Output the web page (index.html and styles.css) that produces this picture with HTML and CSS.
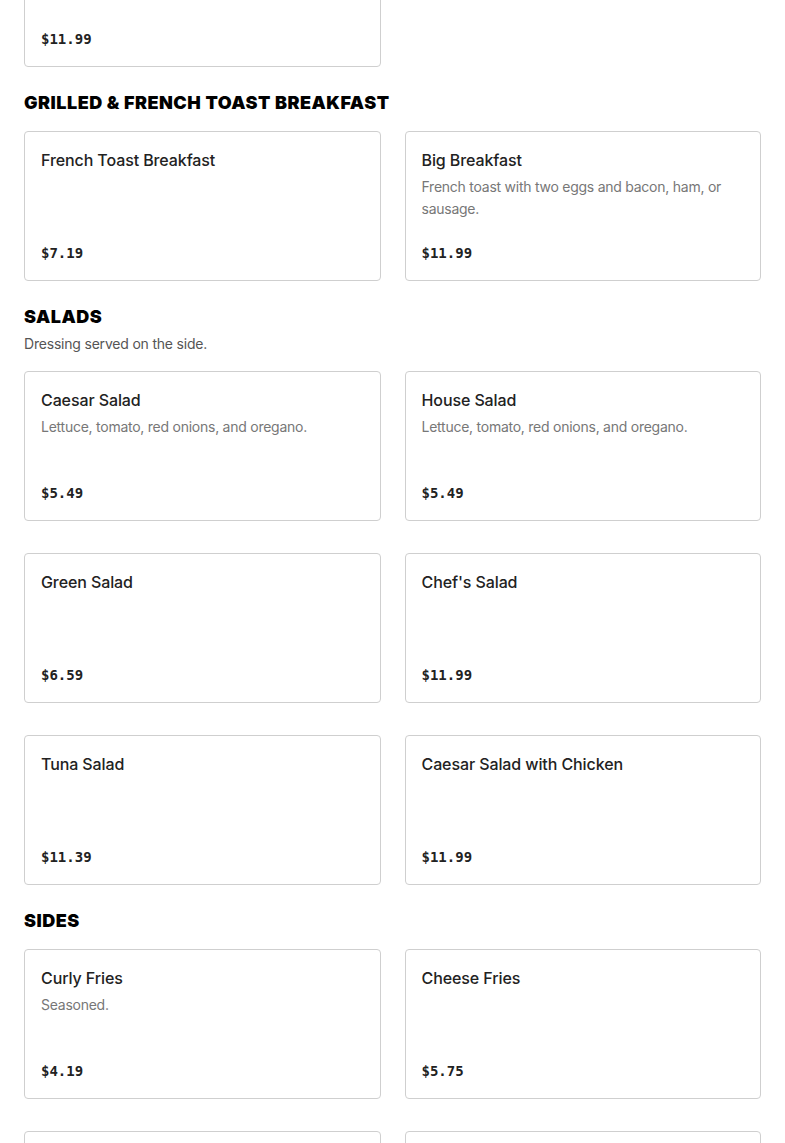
FILE: index.html
```html
<!DOCTYPE html>
<html lang="en">
<head>
<meta charset="utf-8">
<title>Menu</title>
<link rel="stylesheet" href="styles.css">
</head>
<body>
<main class="menu">
  <section class="section section--first">
    <div class="grid">
      <article class="card">
        <h3 class="card-title"></h3>
        <p class="price">$11.99</p>
      </article>
    </div>
  </section>

  <section class="section">
    <h2 class="section-title">Grilled &amp; French Toast Breakfast</h2>
    <div class="grid">
      <article class="card">
        <h3 class="card-title">French Toast Breakfast</h3>
        <p class="price">$7.19</p>
      </article>
      <article class="card">
        <h3 class="card-title">Big Breakfast</h3>
        <p class="card-desc">French toast with two eggs and bacon, ham, or sausage.</p>
        <p class="price">$11.99</p>
      </article>
    </div>
  </section>

  <section class="section">
    <h2 class="section-title section-title--with-desc">Salads</h2>
    <p class="section-desc">Dressing served on the side.</p>
    <div class="grid">
      <article class="card">
        <h3 class="card-title">Caesar Salad</h3>
        <p class="card-desc">Lettuce, tomato, red onions, and oregano.</p>
        <p class="price">$5.49</p>
      </article>
      <article class="card">
        <h3 class="card-title">House Salad</h3>
        <p class="card-desc">Lettuce, tomato, red onions, and oregano.</p>
        <p class="price">$5.49</p>
      </article>
      <article class="card">
        <h3 class="card-title">Green Salad</h3>
        <p class="price">$6.59</p>
      </article>
      <article class="card">
        <h3 class="card-title">Chef's Salad</h3>
        <p class="price">$11.99</p>
      </article>
      <article class="card">
        <h3 class="card-title">Tuna Salad</h3>
        <p class="price">$11.39</p>
      </article>
      <article class="card">
        <h3 class="card-title">Caesar Salad with Chicken</h3>
        <p class="price">$11.99</p>
      </article>
    </div>
  </section>

  <section class="section">
    <h2 class="section-title">Sides</h2>
    <div class="grid">
      <article class="card">
        <h3 class="card-title">Curly Fries</h3>
        <p class="card-desc">Seasoned.</p>
        <p class="price">$4.19</p>
      </article>
      <article class="card">
        <h3 class="card-title">Cheese Fries</h3>
        <p class="price">$5.75</p>
      </article>
      <article class="card">
        <h3 class="card-title"></h3>
        <p class="price"></p>
      </article>
      <article class="card">
        <h3 class="card-title"></h3>
        <p class="price"></p>
      </article>
    </div>
  </section>
</main>
</body>
</html>
```

FILE: styles.css
```css
* { box-sizing: border-box; }

html, body {
  margin: 0;
  padding: 0;
  background: #fff;
}

body {
  font-family: "Inter", "Noto Sans", sans-serif;
  color: #222;
}

.menu {
  padding: 0 24px;
  margin-top: -83px;
}

.section {
  margin-top: 23px;
}

.section--first {
  margin-top: 0;
}

.section-title {
  margin: 0 0 15px;
  font-size: 18px;
  line-height: 26px;
  font-weight: 900;
  text-transform: uppercase;
  color: #000;
  letter-spacing: 0.5px;
}

.section-title--with-desc {
  margin-bottom: 3px;
}

.section-desc {
  margin: 0 0 16px;
  font-size: 14px;
  line-height: 22px;
  letter-spacing: -0.2px;
  color: #555;
}

.grid {
  display: grid;
  grid-template-columns: 1fr 1fr;
  column-gap: 24px;
  row-gap: 32px;
}

.card {
  display: flex;
  flex-direction: column;
  min-height: 150px;
  padding: 16px 16px 15px;
  border: 1px solid #cfcfcf;
  border-radius: 4px;
  background: #fff;
}

.card-title {
  margin: 0;
  font-size: 16px;
  line-height: 24px;
  font-weight: 500;
  letter-spacing: -0.1px;
  color: #222;
}

.card-desc {
  margin: 4px 0 0;
  font-size: 14px;
  line-height: 22px;
  letter-spacing: -0.25px;
  color: #777;
}

.price {
  margin: auto 0 0;
  font-family: "DejaVu Sans Mono", "Liberation Mono", monospace;
  font-size: 14px;
  line-height: 24px;
  font-weight: 700;
  color: #222;
}
```
